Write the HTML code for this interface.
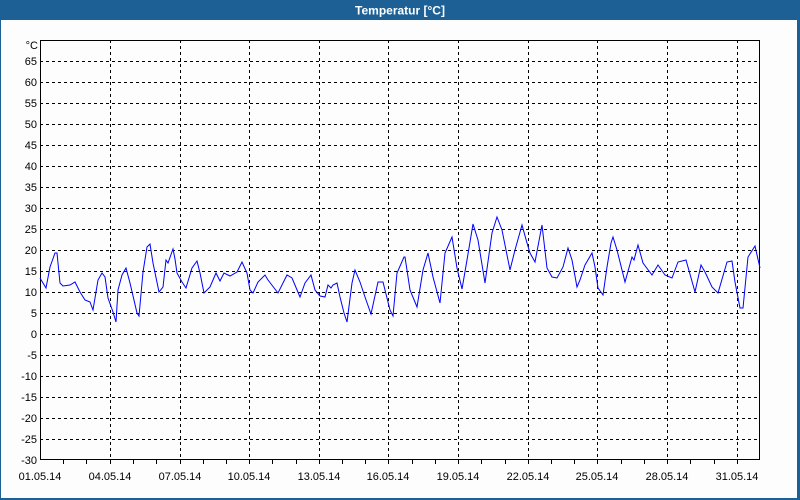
<!DOCTYPE html>
<html><head><meta charset="utf-8"><style>
html,body{margin:0;padding:0;width:800px;height:500px;overflow:hidden;background:#fff}
</style></head><body>
<svg width="800" height="500" xmlns="http://www.w3.org/2000/svg" style="display:block;font-family:'Liberation Sans',sans-serif">
<rect x="0" y="0" width="800" height="500" fill="#1c6096"/>
<rect x="1" y="20" width="796" height="478" fill="#fcfdfc"/>
<text x="400" y="14.5" text-anchor="middle" fill="#fff" font-size="12" font-weight="bold">Temperatur [°C]</text>
<g stroke="#000" stroke-width="1" stroke-dasharray="3,3" shape-rendering="crispEdges">
<path d="M40 61.5H760M40 82.5H760M40 103.5H760M40 124.5H760M40 145.5H760M40 166.5H760M40 187.5H760M40 208.5H760M40 229.5H760M40 250.5H760M40 271.5H760M40 292.5H760M40 313.5H760M40 334.5H760M40 355.5H760M40 376.5H760M40 397.5H760M40 418.5H760M40 439.5H760"/>
<path d="M110.5 40V460M180.5 40V460M249.5 40V460M319.5 40V460M388.5 40V460M458.5 40V460M528.5 40V460M597.5 40V460M667.5 40V460M737.5 40V460"/>
</g>
<rect x="40.5" y="40.5" width="719" height="419" fill="none" stroke="#000" shape-rendering="crispEdges"/>
<path stroke="#000" shape-rendering="crispEdges" d="M63.5 460v4M86.5 460v4M110.5 460v4M133.5 460v4M156.5 460v4M180.5 460v4M203.5 460v4M226.5 460v4M249.5 460v4M272.5 460v4M296.5 460v4M319.5 460v4M342.5 460v4M365.5 460v4M388.5 460v4M412.5 460v4M435.5 460v4M458.5 460v4M481.5 460v4M505.5 460v4M528.5 460v4M551.5 460v4M574.5 460v4M597.5 460v4M621.5 460v4M644.5 460v4M667.5 460v4M690.5 460v4M714.5 460v4M737.5 460v4"/>
<g font-size="11" fill="#000" text-anchor="end">
<text x="38" y="49">°C</text>
<text x="37" y="65">65</text><text x="37" y="86">60</text><text x="37" y="107">55</text><text x="37" y="128">50</text><text x="37" y="149">45</text><text x="37" y="170">40</text><text x="37" y="191">35</text><text x="37" y="212">30</text><text x="37" y="233">25</text><text x="37" y="254">20</text><text x="37" y="275">15</text><text x="37" y="296">10</text><text x="37" y="317">5</text><text x="37" y="338">0</text><text x="37" y="359">-5</text><text x="37" y="380">-10</text><text x="37" y="401">-15</text><text x="37" y="422">-20</text><text x="37" y="443">-25</text><text x="37" y="464">-30</text>
</g>
<g font-size="11" fill="#000" text-anchor="middle">
<text x="40" y="480">01.05.14</text><text x="110" y="480">04.05.14</text><text x="180" y="480">07.05.14</text><text x="249" y="480">10.05.14</text><text x="319" y="480">13.05.14</text><text x="388" y="480">16.05.14</text><text x="458" y="480">19.05.14</text><text x="528" y="480">22.05.14</text><text x="597" y="480">25.05.14</text><text x="667" y="480">28.05.14</text><text x="737" y="480">31.05.14</text>
</g>
<polyline fill="none" stroke="#0000ff" stroke-width="1" points="40,278 46,288 50,267 55,253 57,253 60,283 63,286 70,285 75,282 80,292 85,300 90,302 93,310 98,280 102,273 105,277 108,298 113,312 116,322 118,290 122,275 126,268 130,283 137,313 139,316 143,272 147,247 150,244 153,263 159,292 163,287 166,260 168,263 173,249 175,259 177,273 182,282 186,288 192,268 197,261 200,273 204,293 210,287 216,273 220,281 224,273 230,276 237,272 242,262 247,273 250,290 253,293 258,282 265,275 268,280 278,293 287,275 292,278 300,297 305,283 311,275 315,290 320,296 325,297 328,285 331,288 333,285 337,283 340,297 344,313 347,322 352,283 355,270 360,282 365,297 371,314 378,282 383,282 390,310 393,316 397,273 404,257 405,257 410,290 417,307 423,270 428,253 433,277 440,303 445,253 452,237 457,268 462,289 467,260 473,224 478,240 485,283 492,233 497,217 502,230 510,270 515,250 522,225 527,243 530,253 535,262 542,225 547,268 552,277 557,278 563,267 568,248 572,260 577,287 580,280 585,265 592,253 595,267 598,288 603,295 607,267 611,243 613,237 617,250 625,282 632,257 634,260 638,245 643,263 652,275 658,265 665,275 672,278 678,262 686,260 695,292 701,265 705,272 712,287 718,293 727,262 732,261 735,282 740,308 743,308 748,257 755,246 760,268"/>
</svg>
</body></html>
